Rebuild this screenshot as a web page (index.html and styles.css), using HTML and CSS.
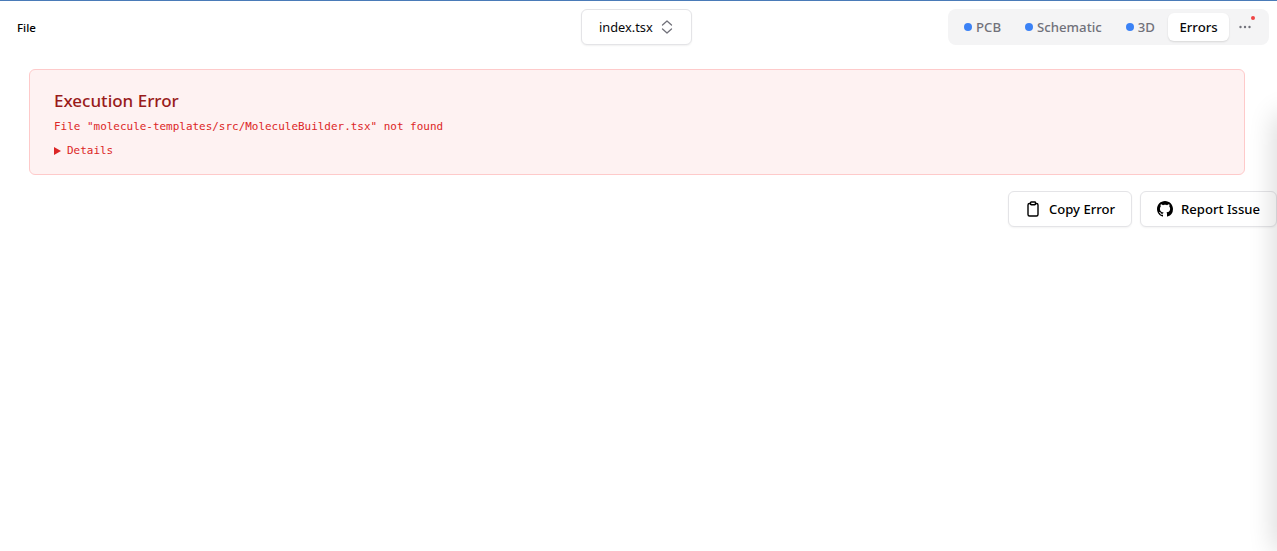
FILE: index.html
```html
<!DOCTYPE html>
<html lang="en">
<head>
<meta charset="utf-8">
<title>Execution Error</title>
<link rel="stylesheet" href="styles.css">
</head>
<body>
<header class="toolbar">
  <div class="toolbar-side"><span class="file-menu">File</span></div>
  <button class="file-select">
    <span>index.tsx</span>
    <svg class="chevrons" width="16" height="16" viewBox="0 0 16 16" fill="none" stroke="#71717a" stroke-width="1.3" stroke-linecap="round" stroke-linejoin="round"><path d="M3.5 6 8 2l4.500 4"/><path d="M3.5 10 8 14l4.500-4"/></svg>
  </button>
  <div class="toolbar-side toolbar-right">
    <nav class="tabs">
      <span class="tab"><i class="dot"></i>PCB</span>
      <span class="tab"><i class="dot"></i>Schematic</span>
      <span class="tab"><i class="dot"></i>3D</span>
      <span class="tab tab-active">Errors</span>
      <span class="more">
        <svg width="16" height="16" viewBox="0 0 16 16" fill="#71717a"><circle cx="3.5" cy="8" r="1.2"/><circle cx="8" cy="8" r="1.2"/><circle cx="12.5" cy="8" r="1.2"/></svg>
        <i class="badge"></i>
      </span>
    </nav>
  </div>
</header>
<main class="content">
  <section class="error-box">
    <h1 class="error-title">Execution Error</h1>
    <p class="error-msg">File "molecule-templates/src/MoleculeBuilder.tsx" not found</p>
    <div class="details"><i class="caret"></i>Details</div>
  </section>
  <div class="actions">
    <button class="action">
      <svg width="16" height="16" viewBox="0 0 16 16" fill="none" stroke="#000" stroke-width="1.4" stroke-linecap="round" stroke-linejoin="round"><path d="M5.5 2.5H4.5a1.5 1.5 0 0 0-1.500 1.500v9.500a1.500 1.500 0 0 0 1.500 1.500h7a1.500 1.500 0 0 0 1.500-1.500V4a1.500 1.500 0 0 0-1.500-1.500h-1"/><rect x="5.500" y="1" width="5" height="2.800" rx=".7"/></svg>
      Copy Error
    </button>
    <button class="action">
      <svg width="16" height="16" viewBox="0 0 16 16" fill="#000"><path d="M8 0C3.58 0 0 3.58 0 8c0 3.54 2.29 6.53 5.47 7.59.4.07.55-.17.55-.38 0-.19-.01-.82-.01-1.49-2.01.37-2.53-.49-2.69-.94-.09-.23-.48-.94-.82-1.13-.28-.15-.68-.52-.01-.53.63-.01 1.08.58 1.23.82.72 1.21 1.87.87 2.33.66.07-.52.28-.87.51-1.07-1.78-.2-3.64-.89-3.64-3.95 0-.87.31-1.59.82-2.15-.08-.2-.36-1.02.08-2.12 0 0 .67-.21 2.2.82.64-.18 1.32-.27 2-.27s1.36.09 2 .27c1.53-1.04 2.2-.82 2.2-.82.44 1.1.16 1.92.08 2.12.51.56.82 1.27.82 2.15 0 3.07-1.87 3.75-3.65 3.95.29.25.54.73.54 1.48 0 1.07-.01 1.93-.01 2.2 0 .21.15.46.55.38A8.01 8.01 0 0 0 16 8c0-4.42-3.58-8-8-8z"/></svg>
      Report Issue
    </button>
  </div>
  <div class="side-shadow"></div>
</main>
</body>
</html>
```
FILE: styles.css
```css
* { box-sizing: border-box; }
html, body { margin: 0; height: 100%; overflow: hidden; background: #fff; }
body { font-family: "Noto Sans", "Open Sans", sans-serif; color: #000; border-top: 1px solid #4a7bb8; position: relative; }
.toolbar { display: grid; grid-template-columns: 564px 111px 1fr; align-items: center; height: 52px; padding: 0 8px 0 17px; }
.toolbar-side { display: flex; align-items: center; }
.toolbar-right { justify-content: flex-end; }
.file-menu { font-size: 11.5px; font-weight: 500; }
.file-select { display: flex; align-items: center; gap: 6px; height: 36px; padding: 0 16px 0 17px; background: #fff; border: 1px solid #e4e4e7; border-radius: 6px; box-shadow: 0 1px 2px rgba(0,0,0,.06); font: inherit; font-size: 12.8px; color: #09090b; }
.chevrons { flex: none; }
.tabs { display: flex; align-items: center; height: 36px; padding: 0 4px; background: #f4f4f5; border-radius: 8px; width: 321px; }
.tab { display: flex; align-items: center; gap: 4px; height: 28px; padding: 0 12px; font-size: 13.2px; font-weight: 500; color: #71717a; white-space: nowrap; }
.tab-active { background: #fff; color: #09090b; border-radius: 6px; box-shadow: 0 1px 2px rgba(0,0,0,.12); padding: 0 11.5px; margin-left: 1px; }
.dot { width: 8px; height: 8px; border-radius: 50%; background: #3b82f6; }
.more { position: relative; display: flex; align-items: center; justify-content: center; width: 32px; height: 28px; }
.badge { position: absolute; top: 3px; right: 6px; width: 4px; height: 4px; border-radius: 50%; background: #ef4444; }
.content { position: relative; padding: 16px 0 0 29px; height: 498px; }
.error-box { width: 1216px; height: 106px; padding: 20px 24px; background: #fef2f2; border: 1px solid #fecaca; border-radius: 6px; }
.error-title { margin: 0; font-size: 17px; line-height: 22px; font-weight: 500; color: #991b1b; }
.error-msg { margin: 6px 0 0; font-family: "DejaVu Sans Mono", monospace; font-size: 10.96px; line-height: 18px; color: #dc2626; }
.details { display: flex; align-items: center; gap: 6px; margin-top: 6px; font-family: "DejaVu Sans Mono", monospace; font-size: 10.96px; line-height: 18px; color: #dc2626; }
.caret { width: 0; height: 0; border-left: 7px solid #dc2626; border-top: 4px solid transparent; border-bottom: 4px solid transparent; }
.actions { display: flex; justify-content: flex-end; gap: 8px; margin-top: 16px; }
.action { display: flex; align-items: center; gap: 8px; height: 36px; padding: 0 16px; background: #fff; border: 1px solid #e4e4e7; border-radius: 6px; box-shadow: 0 1px 2px rgba(0,0,0,.05); font: inherit; font-size: 13.1px; font-weight: 500; color: #000; white-space: nowrap; }
.side-shadow { position: absolute; top: 61px; bottom: 0; left: 100%; width: 20px; box-shadow: 0 0 28px rgba(0,0,0,.2); border-radius: 8px 0 0 0; }
```
